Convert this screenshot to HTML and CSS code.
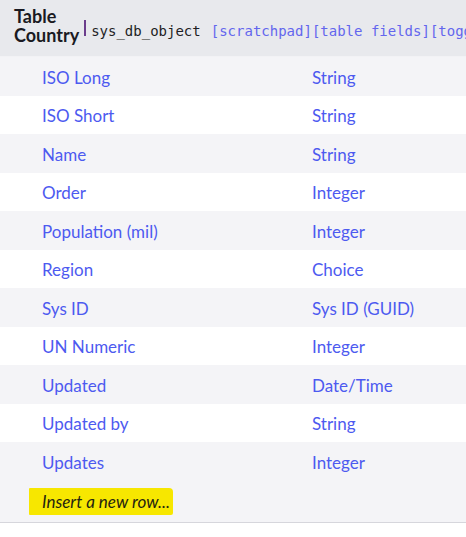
FILE: index.html
```html
<!DOCTYPE html>
<html>
<head>
<meta charset="utf-8">
<link rel="stylesheet" href="styles.css">
</head>
<body>
<div class="header">
  <div class="title">Table<br>Country</div>
  <div class="meta">
    <span class="obj">sys_db_object</span>
    <span class="links"><a>[scratchpad]</a><a>[table fields]</a><a>[toggle]</a></span>
  </div>
</div>
<div class="table">
  <div class="row odd"><span class="c1">ISO Long</span><span class="c2">String</span></div>
  <div class="row"><span class="c1">ISO Short</span><span class="c2">String</span></div>
  <div class="row odd"><span class="c1">Name</span><span class="c2">String</span></div>
  <div class="row"><span class="c1">Order</span><span class="c2">Integer</span></div>
  <div class="row odd"><span class="c1">Population (mil)</span><span class="c2">Integer</span></div>
  <div class="row"><span class="c1">Region</span><span class="c2">Choice</span></div>
  <div class="row odd"><span class="c1">Sys ID</span><span class="c2">Sys ID (GUID)</span></div>
  <div class="row"><span class="c1">UN Numeric</span><span class="c2">Integer</span></div>
  <div class="row odd"><span class="c1">Updated</span><span class="c2">Date/Time</span></div>
  <div class="row"><span class="c1">Updated by</span><span class="c2">String</span></div>
  <div class="row odd"><span class="c1">Updates</span><span class="c2">Integer</span></div>
  <div class="insert"><span class="mark">Insert a new row...</span></div>
</div>
</body>
</html>
```
FILE: styles.css
```css
html, body {
  margin: 0;
  padding: 0;
  background: #ffffff;
  font-family: Lato, "Noto Sans", sans-serif;
  overflow: hidden;
}
.header {
  height: 56px;
  background: #e8e9ed;
  border-bottom: 1px solid #f2f2f5;
  display: flex;
  align-items: flex-start;
  padding-left: 14px;
  white-space: nowrap;
  overflow: hidden;
}
.title {
  font-weight: 700;
  font-size: 18px;
  line-height: 19px;
  color: #1a1a22;
  padding-top: 7px;
}
.meta {
  margin-top: 20px;
  margin-left: 5px;
  border-left: 2px solid #6b3d8c;
  padding-left: 5px;
  height: 16px;
  display: flex;
  align-items: center;
  font-family: "DejaVu Sans Mono", "Liberation Mono", monospace;
  font-size: 14px;
}
.obj {
  color: #1e1e24;
  position: relative;
  top: 3px;
}
.links {
  margin-left: 10px;
  color: #6366ee;
  position: relative;
  top: 3px;
}
.table {
  border-bottom: 1px solid #d6d6dc;
}
.row {
  display: flex;
  box-sizing: border-box;
  height: 38.5px;
  padding-top: 2px;
  align-items: center;
  padding-left: 42px;
  font-size: 17px;
  color: #4d5af0;
  background: #ffffff;
}
.row.odd {
  background: #f4f4f7;
}
.c1 {
  width: 270px;
}
.insert {
  background: #f4f4f7;
  height: 41px;
  padding-left: 29px;
  display: flex;
  align-items: center;
}
.mark {
  background: #f7e700;
  font-style: italic;
  font-size: 17px;
  color: #1f2410;
  padding: 3px 3px 3px 13px;
  border-radius: 1px 4px 2px 1px;
}
```
